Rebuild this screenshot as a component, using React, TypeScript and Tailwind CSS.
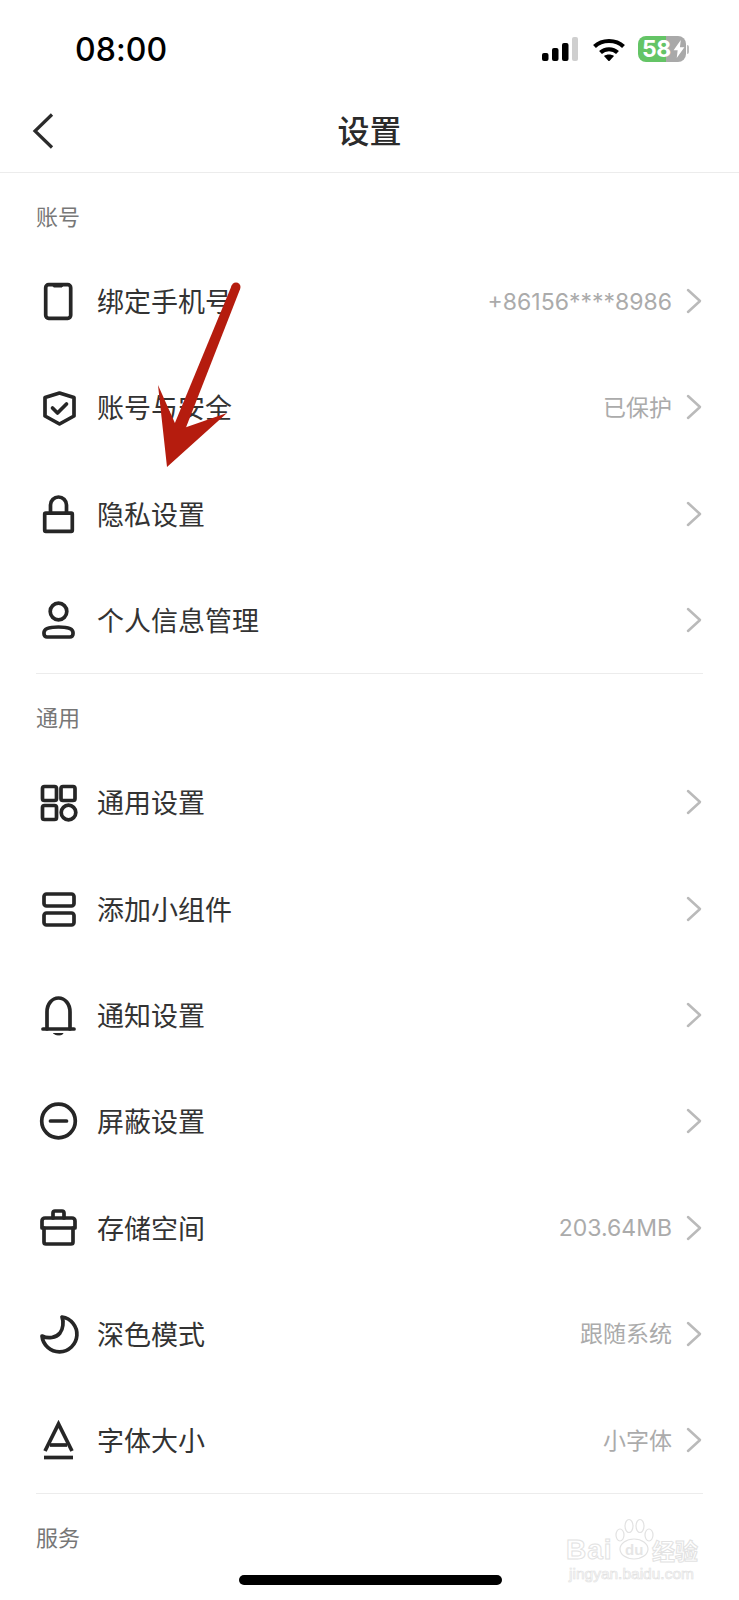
import type { ReactNode } from 'react';

const FONT = "font-['Noto_Sans_CJK_SC','Noto_Sans',sans-serif]";

const Icon = ({ children }: { children: ReactNode }) => (
  <svg
    viewBox="0 0 44 44"
    className="w-[44px] h-[44px] shrink-0"
    fill="none"
    stroke="#262626"
    strokeWidth="3.7"
    strokeLinecap="round"
    strokeLinejoin="round"
  >
    {children}
  </svg>
);

const accountRows = [
  {
    label: '绑定手机号',
    value: '+86156****8986',
    icon: (
      <>
        <rect x="9.7" y="5.7" width="25" height="33.6" rx="3" />
        <path d="M17 6h10l-1 2h-8z" fill="#262626" strokeWidth="1" />
      </>
    ),
  },
  {
    label: '账号与安全',
    value: '已保护',
    icon: (
      <>
        <path d="M23.5 8 38 12.5V31l-14.5 8L9 31V12.5z" />
        <path d="m16.5 23 5 5 9-9" />
      </>
    ),
  },
  {
    label: '隐私设置',
    icon: (
      <>
        <rect x="8.7" y="21.2" width="27.6" height="18.1" rx="1" />
        <path d="M14.5 21v-8a8 8 0 0 1 16 0v8" strokeLinecap="butt" />
      </>
    ),
  },
  {
    label: '个人信息管理',
    icon: (
      <>
        <circle cx="22.5" cy="13.5" r="8.3" />
        <path d="M8 34.5C8 31 13 29 22.5 29S37 31 37 34.5V36a3 3 0 0 1-3 3H11a3 3 0 0 1-3-3z" />
      </>
    ),
  },
];

const generalRows = [
  {
    label: '通用设置',
    icon: (
      <>
        <rect x="6.5" y="6.5" width="14" height="14" rx="2" />
        <rect x="25" y="6.5" width="14" height="14" rx="2" />
        <rect x="6.5" y="25.5" width="14" height="14" rx="2" />
        <circle cx="32.5" cy="32.5" r="7.3" />
      </>
    ),
  },
  {
    label: '添加小组件',
    icon: (
      <>
        <rect x="8" y="7" width="30" height="12" rx="2.5" />
        <rect x="8" y="26" width="30" height="12" rx="2.5" />
      </>
    ),
  },
  {
    label: '通知设置',
    icon: (
      <>
        <path d="M11 36V19C11 11 16 5 22.5 5S34 11 34 19v17" />
        <path d="M7 36h31" />
        <path d="M18 40.5h9c-1 2-8 2-9 0z" fill="#262626" strokeWidth="1" />
      </>
    ),
  },
  {
    label: '屏蔽设置',
    icon: (
      <>
        <circle cx="22.5" cy="22" r="16.8" />
        <path d="M14.5 22h16" />
      </>
    ),
  },
  {
    label: '存储空间',
    value: '203.64MB',
    icon: (
      <>
        <path d="M6 22v-7a3 3 0 0 1 3-3h27a3 3 0 0 1 3 3v7z" />
        <path d="M8 22v14a2 2 0 0 0 2 2h25a2 2 0 0 0 2-2V22" />
        <path d="M17 12V7a2 2 0 0 1 2-2h7a2 2 0 0 1 2 2v5" />
      </>
    ),
  },
  {
    label: '深色模式',
    value: '跟随系统',
    icon: <path d="M26 5A17.5 17.5 0 1 1 6 24c6 3 14 2 18-3 3-4 4-11 2-16z" />,
  },
  {
    label: '字体大小',
    value: '小字体',
    icon: (
      <>
        <path d="M9 33 22.5 6 36 33" strokeLinecap="butt" strokeLinejoin="miter" />
        <path d="M14 27h17" strokeLinecap="butt" />
        <path d="M8 39.500h29" strokeLinecap="butt" />
      </>
    ),
  },
];

const Row = ({ label, value, icon }: { label: string; value?: string; icon: ReactNode }) => (
  <div className="h-[106.3px] flex items-center pl-[36px] pr-[36px]">
    <Icon>{icon}</Icon>
    <span className="ml-[17px] pb-[1px] text-[27px] leading-none text-[#333333]">{label}</span>
    {value && (
      <span className="ml-auto pt-[2px] font-['Inter','Noto_Sans_CJK_SC',sans-serif] text-[23px] leading-none text-[#ababab]">
        {value}
      </span>
    )}
    <svg
      viewBox="0 0 16 26"
      className={`w-[16px] h-[26px] mr-[1px] ${value ? 'ml-[14px]' : 'ml-auto'}`}
      fill="none"
      stroke="#bababa"
      strokeWidth="2.5"
      strokeLinecap="round"
      strokeLinejoin="round"
    >
      <path d="m2 2 12 11L2 24" />
    </svg>
  </div>
);

const SectionTitle = ({ children }: { children: ReactNode }) => (
  <div className="px-[36px] pt-[28px] text-[22px] leading-[28px] text-[#777777]">{children}</div>
);

const Divider = () => <div className="mx-[36px] h-px bg-[#ececec]" />;

const StatusBar = () => (
  <div className="h-[88px] flex items-center pl-[75px] pr-[50px] pt-[10px]">
    <span className="mt-[2px] font-['Inter',sans-serif] font-medium text-[32px] leading-none text-black tracking-[0.1px]">
      08:00
    </span>
    <div className="ml-auto flex items-center">
      <svg viewBox="0 0 36 24" className="w-[36px] h-[24px]">
        <rect x="0" y="16" width="6.5" height="8" rx="2" fill="#000" />
        <rect x="10" y="11" width="6.5" height="13" rx="2" fill="#000" />
        <rect x="20" y="6" width="6.5" height="18" rx="2" fill="#000" />
        <rect x="30" y="0" width="6" height="24" rx="2" fill="#cfcfcf" />
      </svg>
      <svg viewBox="0 0 32 24" className="w-[32px] h-[24px] ml-[15px]" fill="none" stroke="#000" strokeWidth="4">
        <path d="M1.5 9.500C9 2 23 2 30.5 9.500" />
        <path d="M7.5 15.500c4.500-4.500 12.500-4.500 17 0" />
        <path d="M11 19 16 24.500 21 19c-2.500-2-7.500-2-10 0z" fill="#000" stroke="none" />
      </svg>
      <div className="relative ml-[13px] w-[48px] h-[26px] rounded-[8px] overflow-hidden flex">
        <div className="w-[28px] bg-[#64c466]" />
        <div className="flex-1 bg-[#a9a9a9]" />
        <span className="absolute left-[4px] top-0 font-['Inter',sans-serif] font-bold text-[23px] leading-[26px] text-white tracking-[-0.5px]">
          58
        </span>
        <svg viewBox="0 0 12 20" className="absolute right-[1px] top-[4px] w-[12px] h-[18px]">
          <path d="M8 0 0 11.500h4.500L3.500 20 12 8H7z" fill="#fff" />
        </svg>
      </div>
      <div className="ml-[1px] w-[2px] h-[9px] rounded-r bg-[#bdbdbd]" />
    </div>
  </div>
);

const Header = () => (
  <div className="relative h-[85px] flex items-center justify-center border-b border-[#ececec]">
    <svg
      viewBox="0 0 22 36"
      className="absolute left-[32px] top-[25px] w-[22px] h-[36px]"
      fill="none"
      stroke="#2b2b2b"
      strokeWidth="3.2"
    >
      <path d="M20 1.500 3 18l17 16.500" />
    </svg>
    <span className="pb-[2px] text-[32px] leading-none font-medium text-[#2b2b2b]">设置</span>
  </div>
);

// red annotation arrow pasted on top of the list
const Arrow = () => (
  <svg viewBox="0 0 100 200" className="absolute left-[150px] top-[280px] w-[100px] h-[200px]">
    <circle cx="86" cy="7" r="4.5" fill="#b51c0e" />
    <path d="M81.800 5.300 90.200 8.700 35 150 22 150z" fill="#b51c0e" />
    <path d="M8 105 17 187 77 133 28 150z" fill="#b51c0e" />
  </svg>
);

const Watermark = () => (
  <div className="absolute left-[560px] top-[1516px] w-[145px] h-[68px] font-['Liberation_Sans',sans-serif]">
    <span className="absolute left-[6px] top-[20px] text-[28px] leading-[28px] font-bold text-white [-webkit-text-stroke:1px_#e2e2e2] tracking-[1px]">
      Bai
    </span>
    <svg viewBox="0 0 44 44" className="absolute left-[52px] top-[2px] w-[44px] h-[44px]" fill="none" stroke="#e2e2e2" strokeWidth="1.2">
      <ellipse cx="8" cy="17" rx="4" ry="6" />
      <ellipse cx="17" cy="8" rx="4" ry="6.5" />
      <ellipse cx="28" cy="8" rx="4" ry="6.5" />
      <ellipse cx="37" cy="17" rx="4" ry="6" />
      <ellipse cx="22" cy="31" rx="14" ry="10" />
    </svg>
    <span className="absolute left-[65px] top-[26px] text-[15px] leading-[15px] font-bold text-[#e6e6e6]">du</span>
    <span className={`absolute left-[92px] top-[20px] text-[23px] leading-[28px] font-bold text-white [-webkit-text-stroke:1px_#e2e2e2] ${FONT}`}>
      经验
    </span>
    <span className="absolute left-[9px] top-[50px] text-[15.5px] leading-[16px] text-white [-webkit-text-stroke:0.7px_#e2e2e2] whitespace-nowrap">
      jingyan.baidu.com
    </span>
  </div>
);

export default function App() {
  return (
    <div className={`relative w-[739px] h-[1600px] overflow-hidden bg-white ${FONT}`}>
      <StatusBar />
      <Header />

      <SectionTitle>账号</SectionTitle>
      <div className="mt-[19px]">
        {accountRows.map((row) => (
          <Row key={row.label} {...row} />
        ))}
      </div>
      <Divider />

      <SectionTitle>通用</SectionTitle>
      <div className="mt-[19px]">
        {generalRows.map((row) => (
          <Row key={row.label} {...row} />
        ))}
      </div>
      <Divider />

      <SectionTitle>服务</SectionTitle>

      <Arrow />
      <Watermark />
      <div className="absolute left-[239px] top-[1575px] w-[263px] h-[10px] rounded-full bg-black" />
    </div>
  );
}
